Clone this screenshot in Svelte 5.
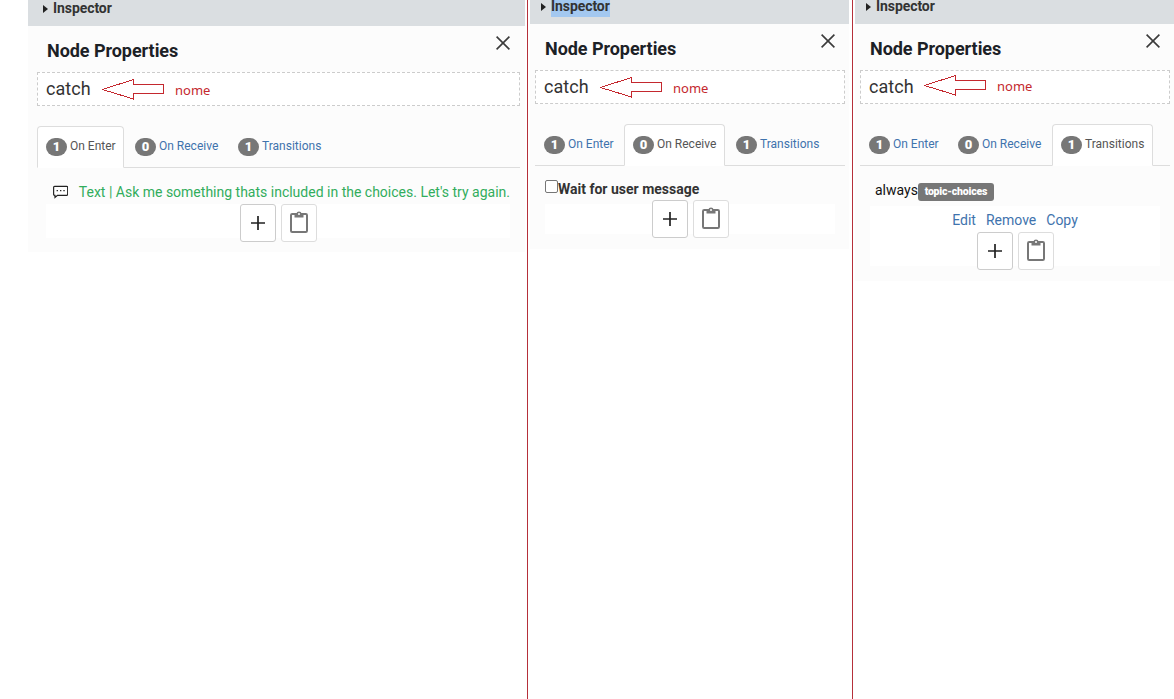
<script>
  const names = ['On Enter', 'On Receive', 'Transitions'];
  const counts = [1, 0, 1];
  const panels = [
    { kind: 'enter', active: 0, ax: 65, ay: 6 },
    { kind: 'receive', active: 1, ax: 65, ay: 6 },
    { kind: 'transitions', active: 2, ax: 64, ay: 4 }
  ];
</script>

{#snippet buttons()}
  <div class="buttons">
    <button class="plus" aria-label="Add">
      <svg width="16" height="16" viewBox="0 0 16 16"><path d="M8 1V15M1 8H15" stroke="#222" stroke-width="1.7" fill="none" /></svg>
    </button>
    <button class="paste" aria-label="Paste">
      <svg width="18" height="22" viewBox="0 0 18 22">
        <rect x="1" y="3" width="16" height="18" rx="1.2" fill="none" stroke="#777" stroke-width="2" />
        <path d="M4.5 2.5H6.3A2.8 2.8 0 0 1 11.7 2.5H13.5V6.5H4.5Z" fill="#777" />
        <circle cx="9" cy="3" r="1" fill="#fff" />
      </svg>
    </button>
  </div>
{/snippet}

<main>
  {#each panels as p}
    <section class={p.kind}>
      <header>
        <svg width="5" height="8" viewBox="0 0 5 8"><path d="M0 0L5 4L0 8Z" fill="#222" /></svg>
        <span>Inspector</span>
      </header>
      <div class="body">
        <div class="title">
          <h2>Node Properties</h2>
          <svg width="14" height="14" viewBox="0 0 14 14"><path d="M.6 .6L13.4 13.4M13.4 .6L.6 13.4" stroke="#3b3b3b" stroke-width="1.6" fill="none" /></svg>
        </div>
        <div class="name">
          <span class="catch">catch</span>
          <div class="note" style="left:{p.ax - 1}px;top:{p.ay}px">
            <svg width="63" height="21" viewBox="0 0 63 21"><path d="M.5 10.5L31.5 .5V5.5H61.5V14.5H31.5V20L.5 10.5Z" fill="none" stroke="#c4282e" shape-rendering="crispEdges" /></svg>
            <span>nome</span>
          </div>
        </div>
        <nav>
          {#each names as n, i}
            <div class="tab t{i}" class:active={i === p.active}>
              <b>{counts[i]}</b><span>{n}</span>
            </div>
          {/each}
        </nav>
        <div class="content">
          {#if p.kind === 'enter'}
            <div class="message">
              <svg width="17" height="14" viewBox="0 0 17 14">
                <path d="M1.8 .7H15.2Q16.3 .7 16.3 1.8V9.6Q16.3 10.7 15.2 10.7H5L2.2 13V10.7H1.8Q.7 10.7 .7 9.6V1.8Q.7 .7 1.8 .7Z" fill="#fff" stroke="#222" stroke-width="1.3" />
                <path d="M4 5.5H5.5M7.8 5.5H9.3M11.5 5.5H13" stroke="#222" stroke-width="1.5" />
              </svg>
              <span>Text | Ask me something thats included in the choices. Let's try again.</span>
            </div>
          {:else if p.kind === 'receive'}
            <label><i></i><span>Wait for user message</span></label>
          {:else}
            <div class="always"><span>always</span><b>topic-choices</b></div>
          {/if}
          <div class="actions">
            {#if p.kind === 'transitions'}
              <div class="links"><a href="#edit">Edit</a><a href="#remove">Remove</a><a href="#copy">Copy</a></div>
            {/if}
            {@render buttons()}
          </div>
        </div>
      </div>
    </section>
  {/each}
</main>

<style>
  :global(body) { background: #fff; overflow: hidden; }
  * { box-sizing: border-box; }
  main {
    width: 1174px; height: 699px; display: grid;
    grid-template-columns: 528px 325px 321px;
    font-family: Roboto, sans-serif; font-size: 14px; color: #333;
  }
  section { padding: 0 3px 0 2px; border-right: 1px solid #b5303a; }
  .enter { padding: 0 2px 0 28px; }
  .transitions { padding-right: 0; border: 0; }
  header {
    height: 24px; padding: 0 0 0 11px; display: flex; align-items: flex-start; gap: 5px;
    background: #dadee1; font-weight: 700; line-height: 13px;
  }
  header svg { margin-top: 3px; }
  header span { height: 17px; letter-spacing: -.08px; }
  .enter header { height: 26px; padding: 2px 0 0 15px; }
  .receive header span { background: #a3c8f0; }
  .body { background: #fcfcfc; padding: 0 4px 0 5px; height: 225px; }
  .enter .body { padding-left: 9px; padding-right: 5px; height: 226px; }
  .transitions .body { height: 257px; }
  .title { height: 46px; display: flex; justify-content: space-between; padding: 10px 10px 0; }
  h2 { margin: 4px 0 0; font-size: 18px; line-height: 22px; font-weight: 700; color: #1c2126; letter-spacing: -.05px; }
  .name { position: relative; height: 34px; border: 1px dashed #ccc; background: #fff; padding: 0 8px; }
  .catch { font-size: 18px; line-height: 31px; letter-spacing: .05px; }
  .note { position: absolute; display: flex; gap: 10px; }
  .note span { font: 13px/22px "Noto Sans", sans-serif; color: #c4282e; }
  nav { margin-top: 20px; height: 42px; display: flex; gap: 2px; border-bottom: 1px solid #ddd; }
  .tab {
    height: 42px; padding: 11px 0 0 8px; display: flex; gap: 3px; border: 1px solid transparent;
    border-radius: 4px 4px 0 0; font-size: 12px; color: #3f73ad; line-height: 17px; white-space: nowrap;
  }
  .t0 { width: 87px; }
  .t1, .t2 { width: 101px; }
  .active { background: #fff; border-color: #ddd; border-bottom-color: #fff; color: #555; }
  .tab b {
    width: 21px; height: 18px; border-radius: 9px; background: #777; color: #fff;
    font-size: 13px; line-height: 18px; text-align: center; font-weight: 900;
  }
  .content { padding: 15px 10px 0 10px; }
  .enter .content { padding-left: 9px; }
  .message { height: 21px; padding: 1px 0 0 7px; display: flex; gap: 10.5px; color: #32ad5c; white-space: nowrap; line-height: 16px; }
  .message svg { margin-top: 1px; }
  label { display: flex; height: 23px; line-height: 16px; font-weight: 700; }
  label i { width: 13px; height: 13px; border: 1px solid #767676; border-radius: 2px; background: #fff; margin-top: -1px; }
  .always { display: flex; height: 25px; padding: 1px 0 0 5px; color: #111; line-height: 16px; }
  .always b { background: #777; color: #fff; height: 18px; margin-top: 1px; width: 76px; border-radius: 3px; font-size: 10.5px; font-weight: 900; letter-spacing: -.2px; line-height: 17px; text-align: center; }
  .actions { background: #fff; height: 30px; display: flow-root; }
  .enter .actions { height: 34px; }
  .transitions .actions { height: 60px; }
  .links { height: 26px; padding-top: 6px; display: flex; justify-content: center; gap: 10px; line-height: 16px; }
  a { color: #3f73ad; text-decoration: none; }
  .buttons { display: flex; justify-content: center; gap: 5px; }
  .receive .buttons { margin-top: -4px; }
  button { width: 36px; height: 38px; padding: 0; border: 1px solid #ddd; border-radius: 3px; background: #fff; display: flex; align-items: center; justify-content: center; }
  button.plus { border-color: #ccc; }
  button.paste { padding-bottom: 2px; }
</style>
